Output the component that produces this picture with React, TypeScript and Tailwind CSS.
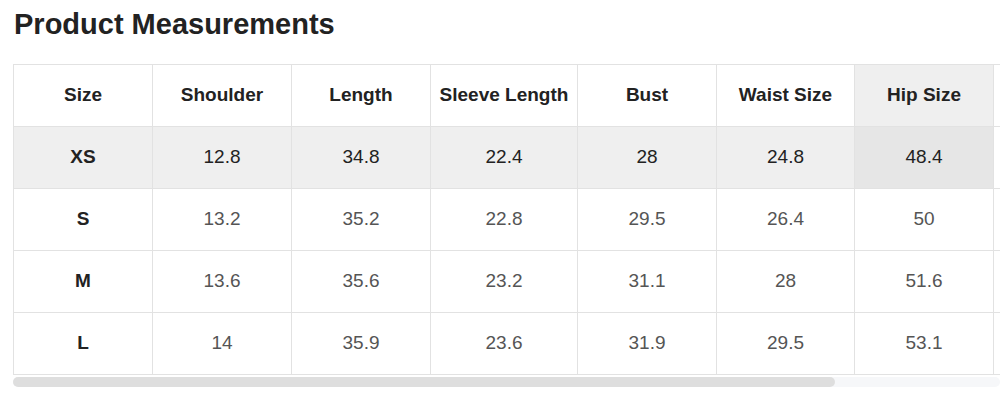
const headers = ['Size', 'Shoulder', 'Length', 'Sleeve Length', 'Bust', 'Waist Size', 'Hip Size', ''];
const widths = ['w-[139px]', 'w-[139px]', 'w-[139px]', 'w-[147px]', 'w-[139px]', 'w-[138px]', 'w-[139px]', 'w-[200px]'];

const rows = [
  ['XS', '12.8', '34.8', '22.4', '28', '24.8', '48.4', ''],
  ['S', '13.2', '35.2', '22.8', '29.5', '26.4', '50', ''],
  ['M', '13.6', '35.6', '23.2', '31.1', '28', '51.6', ''],
  ['L', '14', '35.9', '23.6', '31.9', '29.5', '53.1', ''],
];

const activeRow = 0;
const activeCol = 6;

export default function App() {
  return (
    <div className="w-[1000px] h-[402px] bg-white overflow-hidden" style={{ fontFamily: '"Liberation Sans", Arial, sans-serif' }}>
      <h1 className="pl-[14px] pt-[8px] text-[29px] leading-[33px] font-bold text-[#222]">Product Measurements</h1>

      <div className="ml-[13px] mt-[23px] w-[987px] overflow-hidden">
        <table className="border-collapse table-fixed w-[1181px] text-[19px]">
          <thead>
            <tr className="h-[62px]">
              {headers.map((h, i) => (
                <th
                  key={i}
                  className={`${widths[i]} border border-[#e2e2e2] font-bold text-[#222] text-center ${i === activeCol ? 'bg-[#efefef]' : 'bg-white'}`}
                >
                  {h}
                </th>
              ))}
            </tr>
          </thead>
          <tbody>
            {rows.map((r, ri) => (
              <tr key={r[0]} className={`h-[62px] ${ri === activeRow ? 'bg-[#efefef]' : 'bg-white'}`}>
                {r.map((c, ci) => (
                  <td
                    key={ci}
                    className={`border border-[#e2e2e2] text-center ${ci === 0 ? 'font-bold text-[#222]' : ri === activeRow ? 'text-[#222]' : 'text-[#555]'} ${ri === activeRow && ci === activeCol ? 'bg-[#e6e6e6]' : ''} ${ci === 7 ? 'bg-white' : ''}`}
                  >
                    {c}
                  </td>
                ))}
              </tr>
            ))}
          </tbody>
        </table>

        {/* scrollbar */}
        <div className="mt-[2px] h-[10px] w-full bg-[#f6f7f9] rounded-full">
          <div className="h-full w-[822px] bg-[#dedede] rounded-full" />
        </div>
      </div>
    </div>
  );
}
